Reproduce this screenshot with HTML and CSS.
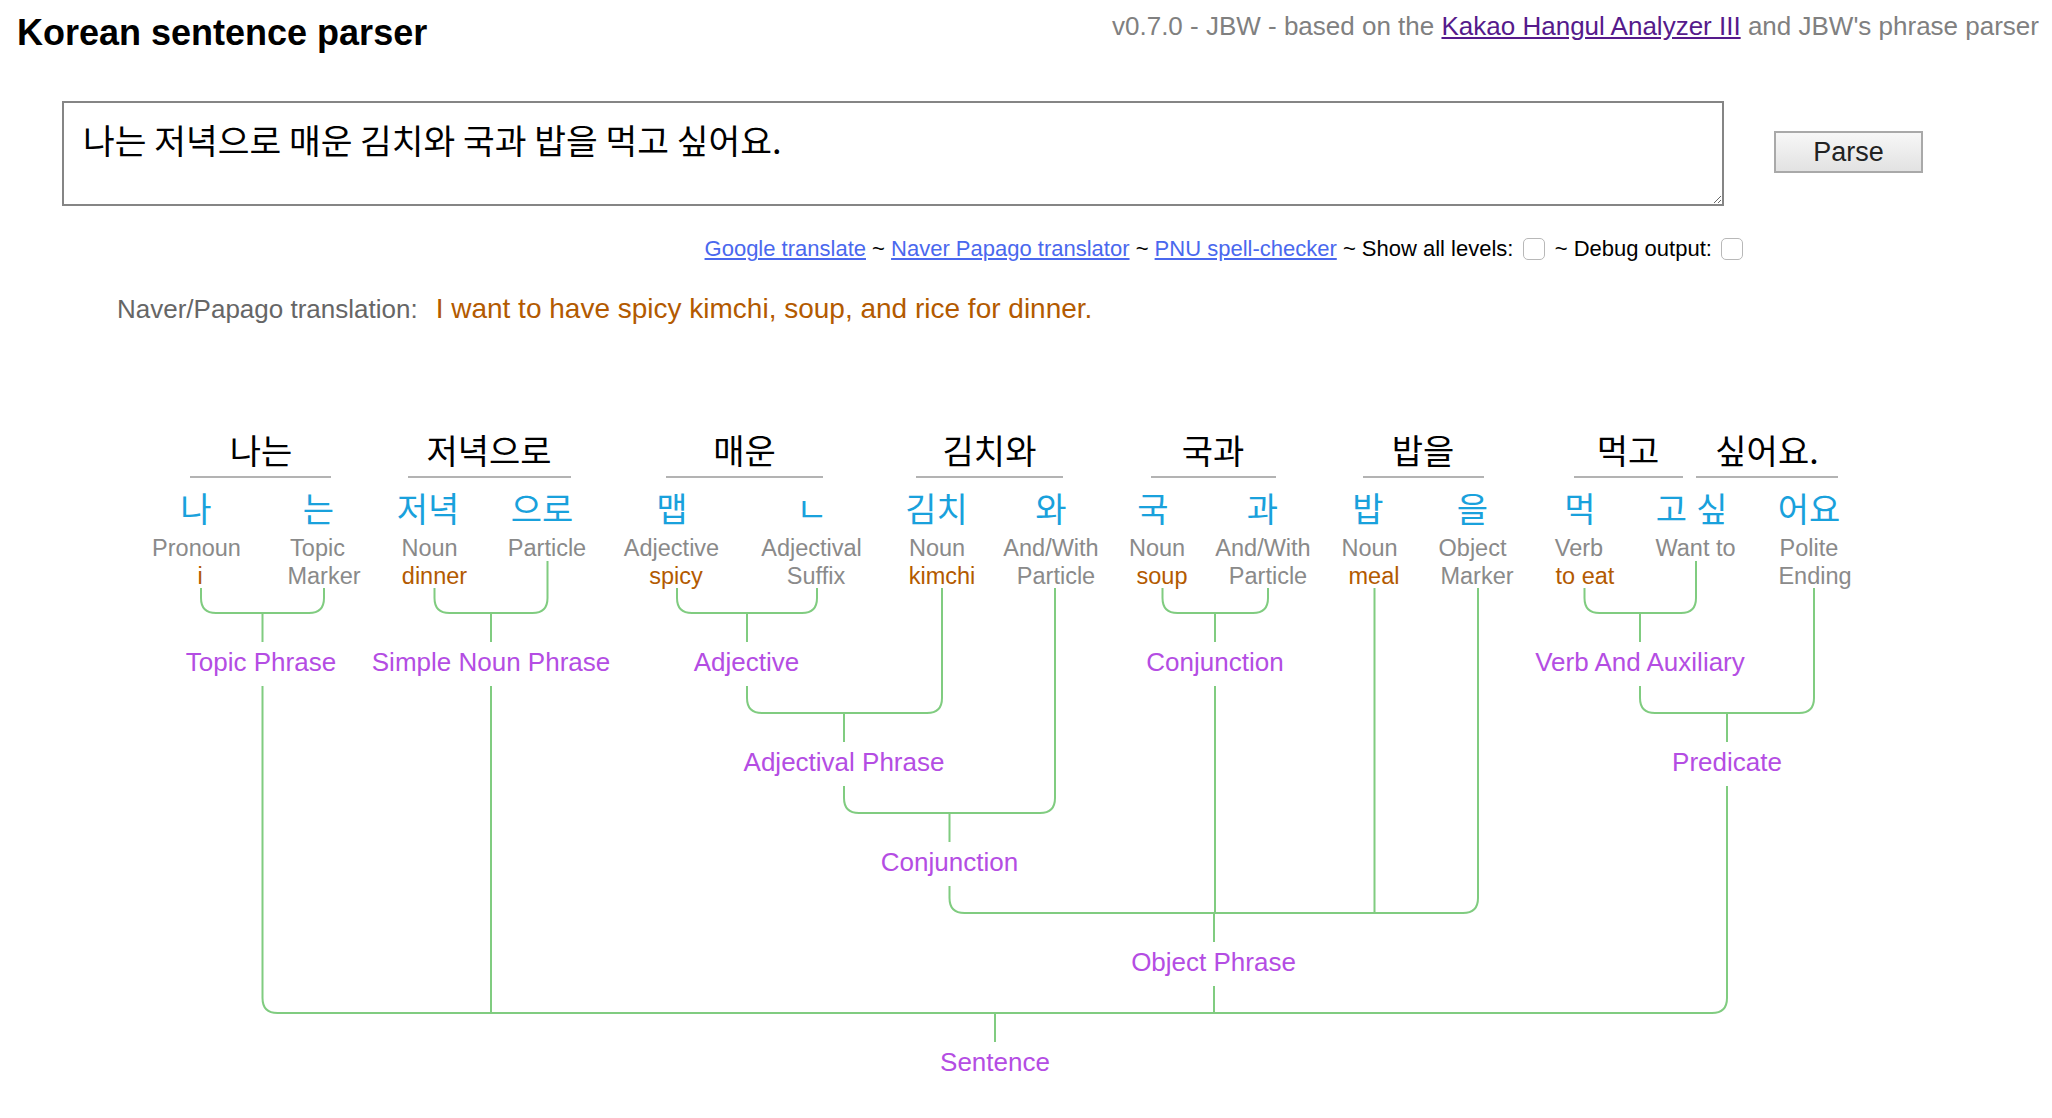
FILE: index.html
```html
<!DOCTYPE html>
<html lang="en">

<head>
  <meta charset="UTF-8">
  <title>Korean sentence parser</title>
  <link rel="stylesheet" href="styles.css">
</head>

<body>
  <div class="header">
    <h1>Korean sentence parser</h1>
    <p class="version">v0.7.0 - JBW - based on the <a href="#">Kakao Hangul Analyzer III</a> and JBW's phrase parser</p>
  </div>

  <div class="input-row">
    <textarea class="sentence-input">나는 저녁으로 매운 김치와 국과 밥을 먹고 싶어요.</textarea>
    <button class="parse-button">Parse</button>
  </div>

  <div class="tools">
    <a href="#">Google translate</a> ~ <a href="#">Naver Papago translator</a> ~ <a href="#">PNU spell-checker</a> ~ Show all levels: <input type="checkbox" class="check"> ~ Debug output: <input type="checkbox" class="check">
  </div>

  <div class="translation">
    <span class="translation-label">Naver/Papago translation:</span>
    <span class="translation-text">I want to have spicy kimchi, soup, and rice for dinner.</span>
  </div>

  <div class="diagram">
    <svg width="2052" height="680" viewBox="0 0 2052 680">
      <!-- words -->
      <text class="word" x="261" y="44">나는</text>
      <text class="word" x="489" y="44">저녁으로</text>
      <text class="word" x="744.5" y="44">매운</text>
      <text class="word" x="989.5" y="44">김치와</text>
      <text class="word" x="1213" y="44">국과</text>
      <text class="word" x="1423" y="44">밥을</text>
      <text class="word" x="1628" y="44">먹고</text>
      <text class="word" x="1767" y="44">싶어요.</text>

      <line class="word-line" x1="190" x2="331" y1="57" y2="57" />
      <line class="word-line" x1="408" x2="571" y1="57" y2="57" />
      <line class="word-line" x1="666" x2="823" y1="57" y2="57" />
      <line class="word-line" x1="916" x2="1063" y1="57" y2="57" />
      <line class="word-line" x1="1151" x2="1276" y1="57" y2="57" />
      <line class="word-line" x1="1363" x2="1484" y1="57" y2="57" />
      <line class="word-line" x1="1574" x2="1683" y1="57" y2="57" />
      <line class="word-line" x1="1696" x2="1838" y1="57" y2="57" />

      <!-- morphemes -->
      <text class="morph" x="196" y="101.5">나</text>
      <text class="morph" x="318.5" y="101.5">는</text>
      <text class="morph" x="428" y="101.5">저녁</text>
      <text class="morph" x="542" y="101.5">으로</text>
      <text class="morph" x="672" y="101.5">맵</text>
      <text class="morph" x="812" y="101.5">ㄴ</text>
      <text class="morph" x="936.5" y="101.5">김치</text>
      <text class="morph" x="1051" y="101.5">와</text>
      <text class="morph" x="1153" y="101.5">국</text>
      <text class="morph" x="1262.5" y="101.5">과</text>
      <text class="morph" x="1368" y="101.5">밥</text>
      <text class="morph" x="1472.5" y="101.5">을</text>
      <text class="morph" x="1580" y="101.5">먹</text>
      <text class="morph" x="1671.5" y="101.5">고</text>
      <text class="morph" x="1712" y="101.5">싶</text>
      <text class="morph" x="1809" y="101.5">어요</text>

      <!-- parts of speech and glosses -->
      <text class="pos" x="196.5" y="135.5">Pronoun</text>
      <text class="gloss" x="200" y="163.5">i</text>
      <text class="pos" x="317.5" y="135.5">Topic</text>
      <text class="pos" x="324" y="163.5">Marker</text>
      <text class="pos" x="429.5" y="135.5">Noun</text>
      <text class="gloss" x="434.5" y="163.5">dinner</text>
      <text class="pos" x="547" y="135.5">Particle</text>
      <text class="pos" x="671.5" y="135.5">Adjective</text>
      <text class="gloss" x="676" y="163.5">spicy</text>
      <text class="pos" x="811.5" y="135.5">Adjectival</text>
      <text class="pos" x="816" y="163.5">Suffix</text>
      <text class="pos" x="937" y="135.5">Noun</text>
      <text class="gloss" x="942" y="163.5">kimchi</text>
      <text class="pos" x="1051" y="135.5">And/With</text>
      <text class="pos" x="1056" y="163.5">Particle</text>
      <text class="pos" x="1157" y="135.5">Noun</text>
      <text class="gloss" x="1162" y="163.5">soup</text>
      <text class="pos" x="1263" y="135.5">And/With</text>
      <text class="pos" x="1268" y="163.5">Particle</text>
      <text class="pos" x="1369.5" y="135.5">Noun</text>
      <text class="gloss" x="1374" y="163.5">meal</text>
      <text class="pos" x="1472.5" y="135.5">Object</text>
      <text class="pos" x="1477" y="163.5">Marker</text>
      <text class="pos" x="1579" y="135.5">Verb</text>
      <text class="gloss" x="1585" y="163.5">to eat</text>
      <text class="pos" x="1695.5" y="135.5">Want to</text>
      <text class="pos" x="1809" y="135.5">Polite</text>
      <text class="pos" x="1815" y="163.5">Ending</text>

      <!-- tree: level 1 -->
      <path class="tree" d="M201 168 V178 Q201 193 216 193 H309 Q324 193 324 178 V168 M262.5 193 V222" />
      <path class="tree" d="M434.5 168 V178 Q434.5 193 449.5 193 H532.5 Q547.5 193 547.5 178 V141 M491 193 V222" />
      <path class="tree" d="M677 168 V178 Q677 193 692 193 H802 Q817 193 817 178 V168 M747 193 V222" />
      <path class="tree" d="M1162.5 168 V178 Q1162.5 193 1177.5 193 H1253 Q1268 193 1268 178 V168 M1215 193 V222" />
      <path class="tree" d="M1584.5 168 V178 Q1584.5 193 1599.5 193 H1681 Q1696 193 1696 178 V141 M1640 193 V222" />

      <!-- level 2 -->
      <path class="tree" d="M747 266 V278 Q747 293 762 293 H927 Q942 293 942 278 V168 M844 293 V322" />
      <path class="tree" d="M1640 266 V278 Q1640 293 1655 293 H1799 Q1814 293 1814 278 V168 M1727 293 V322" />

      <!-- level 3 -->
      <path class="tree" d="M844 366 V378 Q844 393 859 393 H1040 Q1055 393 1055 378 V168 M949.5 393 V422" />

      <!-- level 4 -->
      <path class="tree" d="M949.5 466 V478 Q949.5 493 964.5 493 H1463 Q1478 493 1478 478 V168 M1215 266 V493 M1374.5 168 V493 M1214 493 V522" />

      <!-- level 5 -->
      <path class="tree" d="M262.5 266 V578 Q262.5 593 277.5 593 H1712 Q1727 593 1727 578 V366 M491 266 V593 M1214 566 V593 M995 593 V622" />

      <!-- phrases -->
      <text class="phrase" x="261" y="251">Topic Phrase</text>
      <text class="phrase" x="491" y="251">Simple Noun Phrase</text>
      <text class="phrase" x="746.5" y="251">Adjective</text>
      <text class="phrase" x="1215" y="251">Conjunction</text>
      <text class="phrase" x="1640" y="251">Verb And Auxiliary</text>
      <text class="phrase" x="844" y="351">Adjectival Phrase</text>
      <text class="phrase" x="1727" y="351">Predicate</text>
      <text class="phrase" x="949.5" y="451">Conjunction</text>
      <text class="phrase" x="1213.5" y="551">Object Phrase</text>
      <text class="phrase" x="995" y="651">Sentence</text>
    </svg>
  </div>
</body>

</html>
```

FILE: styles.css
```css
body {
  margin: 0;
  font-family: "Liberation Sans", Arial, sans-serif;
  color: #000;
  background: #fff;
}

.header {
  display: flex;
  justify-content: space-between;
  align-items: flex-start;
  padding: 0 13px 0 17px;
}

.header h1 {
  margin: 13px 0 0;
  font-size: 36px;
  line-height: 40px;
}

.version {
  margin: 11px 0 0;
  font-size: 26px;
  line-height: 30px;
  color: #808080;
}

.version a {
  color: #551a8b;
}

.input-row {
  display: flex;
  align-items: flex-start;
  margin: 48px 0 0 62px;
}

.sentence-input {
  box-sizing: border-box;
  width: 1662px;
  height: 105px;
  margin: 0;
  padding: 16px 19px 0;
  border: 2px solid #858585;
  font-family: "Noto Sans CJK KR", sans-serif;
  font-size: 34.5px;
  line-height: 40px;
  color: #000;
}

.parse-button {
  box-sizing: border-box;
  width: 149px;
  height: 42px;
  margin: 30px 0 0 50px;
  padding: 0;
  border: 2px solid #a9a9a9;
  background: linear-gradient(#f7f7f7, #e2e2e2);
  font-family: inherit;
  font-size: 27px;
  color: #222;
}

.tools {
  margin-top: 28px;
  padding-right: 305px;
  text-align: right;
  font-size: 22px;
  line-height: 30px;
}

.tools a {
  color: #4a68ee;
}

.check {
  appearance: none;
  box-sizing: border-box;
  width: 22px;
  height: 22px;
  margin: 0 4px 0 3px;
  border: 1.5px solid #b8b8b8;
  border-radius: 5px;
  background: #fff;
  vertical-align: -4px;
}

.translation {
  display: flex;
  align-items: baseline;
  gap: 18px;
  margin-top: 28px;
  padding-left: 117px;
  font-size: 26px;
  line-height: 34px;
}

.translation-label {
  color: #666;
}

.translation-text {
  font-size: 28px;
  color: #b35a00;
}

.diagram {
  margin-top: 94px;
}

.diagram svg {
  display: block;
}

.word,
.morph {
  font-family: "Noto Sans CJK KR", sans-serif;
  font-size: 34px;
  text-anchor: middle;
}

.word {
  fill: #000;
}

.morph {
  fill: #19a1dc;
}

.pos,
.gloss,
.phrase {
  font-family: "Liberation Sans", Arial, sans-serif;
  text-anchor: middle;
}

.pos,
.gloss {
  font-size: 23.5px;
}

.pos {
  fill: #8a8a8a;
}

.gloss {
  fill: #b35a00;
}

.phrase {
  font-size: 26px;
  fill: #b44de3;
}

.word-line {
  stroke: #b3b3b3;
  stroke-width: 2;
}

.tree {
  fill: none;
  stroke: #80cc80;
  stroke-width: 2;
}
```
